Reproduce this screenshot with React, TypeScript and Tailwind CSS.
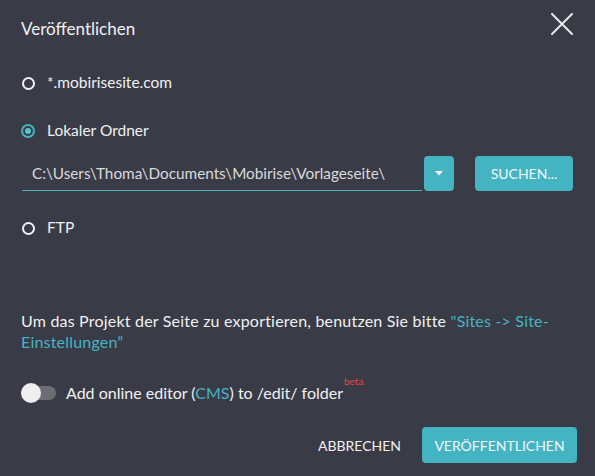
import React from "react";

function Radio({ checked }: { checked?: boolean }) {
  if (checked) {
    return (
      <span className="flex h-[14px] w-[14px] items-center justify-center rounded-full border-2 border-[#45b4c2]">
        <span className="h-[6px] w-[6px] rounded-full bg-[#5cc3cf]" />
      </span>
    );
  }
  return <span className="block h-[13px] w-[13px] rounded-full border-2 border-[#f2f2f2]" />;
}

export default function App() {
  return (
    <div
      className="flex h-[476px] w-[595px] flex-col bg-[#393b47] text-[#f1f1f1]"
      style={{ fontFamily: "Lato, 'Open Sans', sans-serif" }}
    >
      <div className="flex h-[58px] items-start justify-between pl-[21px] pr-[22px]">
        <div className="mt-[18px] text-[17px] leading-[22px]">Veröffentlichen</div>
        <svg className="mt-[13px]" width="22" height="22" viewBox="0 0 22 22">
          <path d="M1 1 L21 21 M21 1 L1 21" stroke="#e8e8e8" strokeWidth="2" strokeLinecap="round" />
        </svg>
      </div>

      <div className="flex h-[50px] items-center gap-[12px] pl-[22px] text-[15.5px]">
        <Radio />
        <span>*.mobirisesite.com</span>
      </div>
      <div className="flex h-[46px] items-center gap-[12px] pl-[21px] text-[15.5px]">
        <Radio checked />
        <span>Lokaler Ordner</span>
      </div>

      <div className="mt-[2px] flex h-[35px] items-stretch pl-[22px]">
        <div className="flex w-[400px] items-center border-b border-[#45b4c2] pl-[10px] text-[15.3px] text-[#d9dadd]">
          C:\Users\Thoma\Documents\Mobirise\Vorlageseite\
        </div>
        <div className="ml-[2px] flex w-[30px] items-center justify-center rounded-[4px] bg-[#45b4c2]">
          <svg width="8" height="5" viewBox="0 0 8 5">
            <path d="M0 0 L8 0 L4 4.5 Z" fill="#f2f2f2" />
          </svg>
        </div>
        <div className="ml-[21px] flex w-[98px] items-center justify-center rounded-[4px] bg-[#45b4c2] text-[14px] text-[#eef8f9]">
          SUCHEN...
        </div>
      </div>

      <div className="mt-[14px] flex h-[46px] items-center gap-[12px] pl-[22px] text-[15.5px]">
        <Radio />
        <span>FTP</span>
      </div>

      <div className="mt-[59px] pl-[21px] pr-[20px] text-[16px] leading-[21px] tracking-[0.2px]">
        <div className="whitespace-nowrap">
          Um das Projekt der Seite zu exportieren, benutzen Sie bitte{" "}
          <span className="text-[#45b4c2]">"Sites -&gt; Site-</span>
        </div>
        <div className="text-[#45b4c2]">Einstellungen”</div>
      </div>

      <div className="mt-[30px] flex h-[22px] items-center pl-[21px] text-[16px]">
        <div className="relative h-[20px] w-[36px] shrink-0">
          <div className="absolute left-[8px] top-[3px] h-[14px] w-[27px] rounded-full bg-[#6c6d73]" />
          <div className="absolute left-0 top-0 h-[20px] w-[20px] rounded-full bg-[#efefef]" />
        </div>
        <span className="ml-[9px]">
          Add online editor (<span className="text-[#45b4c2]">CMS</span>) to /edit/ folder
        </span>
        <span className="relative -top-[12px] ml-[1px] text-[10px] text-[#e0464a]">beta</span>
      </div>

      <div className="mt-[23px] flex items-center justify-end pr-[18px]">
        <div className="mr-[21px] text-[14px] text-[#f1f1f1]">ABBRECHEN</div>
        <div className="flex h-[36px] w-[155px] items-center justify-center rounded-[4px] bg-[#45b4c2] text-[14px] text-[#eef8f9]">
          VERÖFFENTLICHEN
        </div>
      </div>
    </div>
  );
}
